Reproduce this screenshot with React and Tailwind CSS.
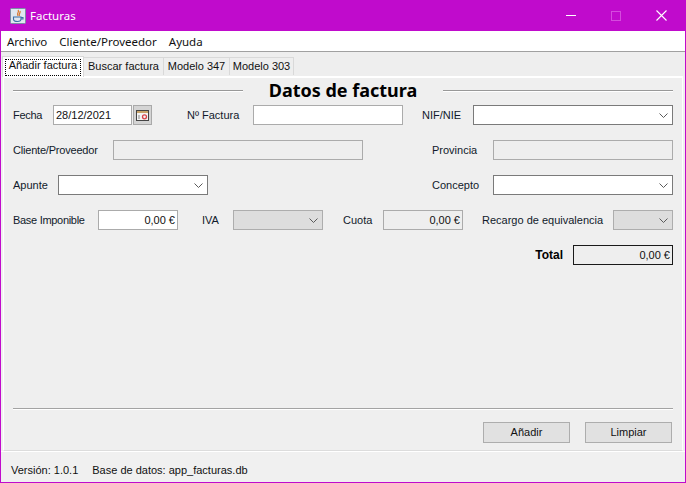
import React from "react";

function Chevron({ className = "" }) {
  return (
    <svg width="9" height="5" viewBox="0 0 9 5" className={className} fill="none" stroke="#5a5a5a" strokeWidth="1">
      <path d="M0.5 0.5 L4.5 4.5 L8.5 0.5" />
    </svg>
  );
}

function Select({ className = "", disabled = false }) {
  return (
    <div className={`h-5 flex items-center justify-end pr-1 border ${disabled ? "bg-[#dddddd] border-[#adadad]" : "bg-white border-[#7a7a7a]"} ${className}`}>
      <Chevron />
    </div>
  );
}

function Field({ className = "", children, tone = "white" }) {
  const tones = {
    white: "bg-white border-[#ababab]",
    gray: "bg-[#eeeeee] border-[#ababab]",
    total: "bg-[#eeeeee] border-[#1a1a1a]",
  };
  return (
    <div className={`h-5 flex items-center justify-end pr-[2px] border text-[#111111] ${tones[tone]} ${className}`}>
      {children}
    </div>
  );
}

function Label({ className = "", children }) {
  return <span className={`shrink-0 whitespace-nowrap text-[#111a2b] ${className}`}>{children}</span>;
}

function Row({ children }) {
  return <div className="flex items-center h-5 mb-[15px]">{children}</div>;
}

export default function App() {
  return (
    <div className="w-[686px] h-[483px] flex flex-col overflow-hidden bg-[#c00bcc] px-px pb-px text-[11px] leading-none font-['Liberation_Sans','Noto_Sans',sans-serif] text-[#111111]">
      {/* Title bar */}
      <div className="h-[31px] shrink-0 flex items-center text-white text-[11.5px] font-['Noto_Sans',sans-serif]">
        <svg width="16" height="16" viewBox="0 0 16 16" className="ml-[9px] mr-1">
          <rect x="0.5" y="0.5" width="15" height="15" rx="1" fill="#dfe7ef" stroke="#7a8fa5" />
          <path d="M8 2 C10 4 6 5 8 8 M10 3 C11 5 8 6 9.5 8" fill="none" stroke="#d8752a" strokeWidth="1.2" />
          <path d="M3.5 9 H11 V11 C11 13 9.5 13.5 7.5 13.5 C5 13.5 3.5 13 3.5 11 Z M11 9.5 H13 V11 H11" fill="none" stroke="#3b6ea8" strokeWidth="1.1" />
        </svg>
        <span>Facturas</span>
        <div className="ml-auto flex items-center">
          <div className="w-[10px] h-px bg-white mr-[35px]" />
          <div className="w-[10px] h-[10px] border border-[#d54bde] mr-[35px]" />
          <svg width="11" height="11" viewBox="0 0 11 11" className="mr-[18px]" stroke="white" strokeWidth="1.1">
            <path d="M0.5 0.5 L10.5 10.5 M10.5 0.5 L0.5 10.5" />
          </svg>
        </div>
      </div>

      {/* Menu bar */}
      <div className="h-[21px] shrink-0 bg-white border-b border-[#a0a0a0] flex items-center pl-[6px] pt-[2px] gap-[12px] text-[11.5px] font-['Noto_Sans',sans-serif]">
        <span>Archivo</span>
        <span>Cliente/Proveedor</span>
        <span>Ayuda</span>
      </div>

      {/* Tabs */}
      <div className="h-[24px] shrink-0 bg-[#eeeeee] flex items-end pl-px relative whitespace-nowrap">
        <div className="relative z-10 h-[21px] w-[82px] mb-[-1px] pb-[3px] bg-white border-t border-x border-[#d9d9d9] flex items-center justify-center">
          <span className="absolute inset-x-[2px] top-[2px] bottom-px border border-dotted border-black" />
          <span>Añadir factura</span>
        </div>
        <div className="h-[18px] w-[80px] bg-[#eeeeee] border-t border-r border-[#d9d9d9] flex items-center justify-center mb-px">Buscar factura</div>
        <div className="h-[18px] w-[66px] bg-[#eeeeee] border-t border-r border-[#d9d9d9] flex items-center justify-center mb-px">Modelo 347</div>
        <div className="h-[18px] w-[64px] bg-[#eeeeee] border-t border-r border-[#d9d9d9] flex items-center justify-center mb-px">Modelo 303</div>
      </div>

      {/* Panel */}
      <div className="flex-1 flex flex-col bg-[#f0f0f0] min-h-0">
        <div className="flex-1 flex flex-col mx-[2px] border-t-2 border-x border-white bg-[#efefef] px-[9px] min-h-0 border-b border-b-[#dcdcdc]">
          {/* Heading */}
          <div className="flex items-center h-[24px] mb-[3px]">
            <div className="w-[230px] border-t border-[#999999] shadow-[0_1px_0_#ffffff]" />
            <div className="flex-1 text-center text-[18px] font-bold font-['Noto_Sans',sans-serif] text-black whitespace-nowrap">Datos de factura</div>
            <div className="w-[230px] border-t border-[#999999] shadow-[0_1px_0_#ffffff]" />
          </div>

          <Row>
            <Label className="w-[40px] tracking-[-0.3px]">Fecha</Label>
            <Field className="w-[79px] !justify-start pl-[2px]">28/12/2021</Field>
            <div className="w-[19px] h-5 ml-px bg-[#d4d4d4] border border-[#a9a9a9] flex items-center justify-center">
              <svg width="13" height="11" viewBox="0 0 13 11">
                <rect x="0.5" y="0.5" width="12" height="10" fill="#f4f4f4" stroke="#444444" />
                <rect x="1" y="1" width="11" height="2" fill="#c9a46a" />
                <circle cx="8.5" cy="6.8" r="2" fill="none" stroke="#d8434a" strokeWidth="1.3" />
                <path d="M3 5 V9" stroke="#888888" />
              </svg>
            </div>
            <Label className="ml-[35px] w-[66px]">Nº Factura</Label>
            <Field className="w-[150px]" />
            <Label className="ml-[19px] w-[51px]">NIF/NIE</Label>
            <Select className="w-[200px]" />
          </Row>

          <Row>
            <Label className="w-[100px] tracking-[-0.2px]">Cliente/Proveedor</Label>
            <Field tone="gray" className="w-[250px]" />
            <Label className="ml-[69px] w-[61px]">Provincia</Label>
            <Field tone="gray" className="w-[180px]" />
          </Row>

          <Row>
            <Label className="w-[45px]">Apunte</Label>
            <Select className="w-[150px]" />
            <Label className="ml-[224px] w-[61px]">Concepto</Label>
            <Select className="w-[180px]" />
          </Row>

          <Row>
            <Label className="w-[85px] tracking-[-0.3px]">Base Imponible</Label>
            <Field className="w-[80px]">0,00 €</Field>
            <Label className="ml-[24px] w-[31px]">IVA</Label>
            <Select disabled className="w-[90px]" />
            <Label className="ml-[20px] w-[40px]">Cuota</Label>
            <Field tone="gray" className="w-[80px]">0,00 €</Field>
            <Label className="ml-[19px] w-[131px]">Recargo de equivalencia</Label>
            <Select disabled className="w-[60px]" />
          </Row>

          <div className="flex items-center justify-end h-5">
            <span className="font-bold text-[12px] text-black mr-[10px]">Total</span>
            <Field tone="total" className="w-[100px]">0,00 €</Field>
          </div>

          <div className="flex-1" />

          <div className="border-t border-[#a3a3a3] shadow-[0_1px_0_#ffffff]" />

          <div className="flex justify-end gap-[15px] mt-[13px] mb-[7px] pr-px">
            <div className="w-[87px] h-[21px] bg-[#e1e1e1] border border-[#adadad] flex items-center justify-center">Añadir</div>
            <div className="w-[87px] h-[21px] bg-[#e1e1e1] border border-[#adadad] flex items-center justify-center">Limpiar</div>
          </div>
        </div>

        {/* Footer */}
        <div className="h-[31px] shrink-0 flex items-center pl-[10px] pt-[6px] gap-[14px] bg-[#f0f0f0] border-t border-white">
          <span>Versión: 1.0.1</span>
          <span>Base de datos: app_facturas.db</span>
        </div>
      </div>
    </div>
  );
}
